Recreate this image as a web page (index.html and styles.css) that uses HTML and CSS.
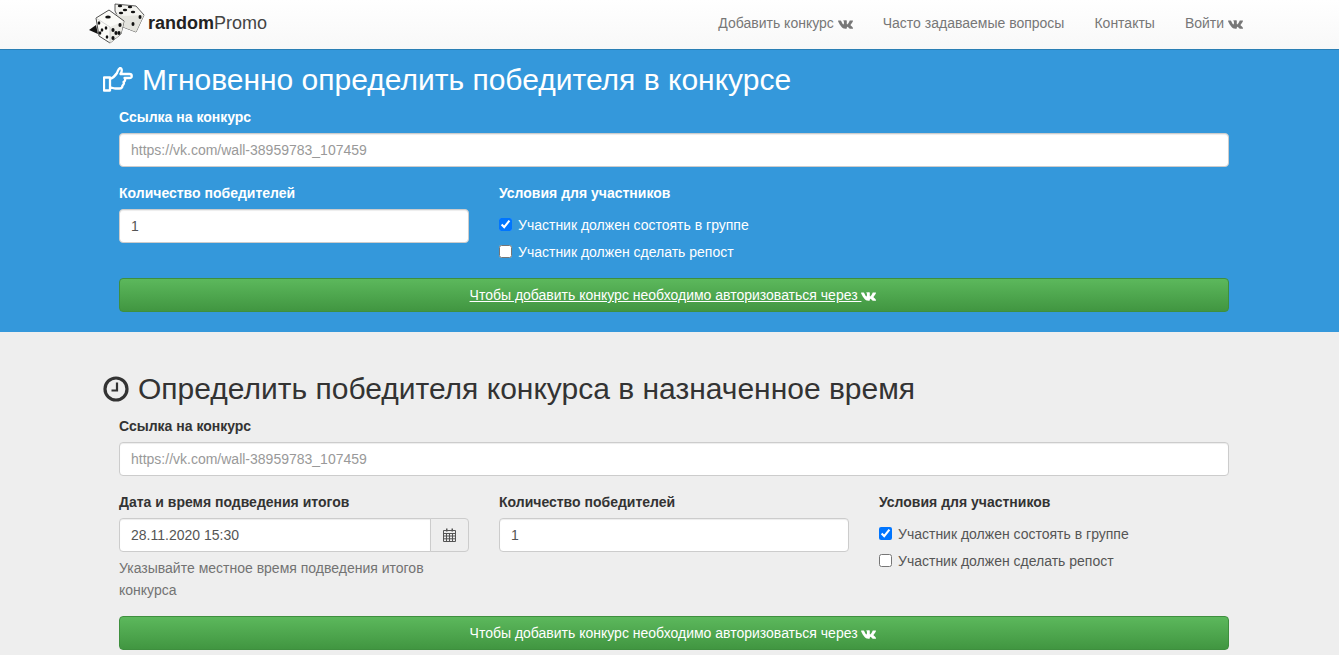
FILE: index.html
```html
<!DOCTYPE html>
<html lang="ru">
<head>
<meta charset="utf-8">
<title>randomPromo</title>
<link rel="stylesheet" href="styles.css">
</head>
<body>
<svg class="defs" aria-hidden="true"><defs><symbol id="vk" viewBox="0 930 1920 1110"><path fill="currentColor" d="M1917 1016q23 64-150 294-24 32-65 85-78 100-90 131-13 41 18 80 17 21 81 82h1l1 1 1 1 2 2q141 131 191 221 3 5 6.5 12.5t7 26.5-.5 34-25 27.5-59 12.5l-256 4q-24 5-56-5t-52-22l-20-12q-30-21-70-64t-68.5-77.5-61-58-56.5-15.5q-3 1-8 3.5t-17 14.5-21.5 29.5-17 52-6.5 77.5q0 15-3.5 27.5t-7.5 18.5l-4 5q-18 19-53 22h-115q-71 4-146-16.5t-131.5-53-103-66-70.5-57.5l-25-24q-10-10-27.5-30t-71.5-91-106-151-122.5-211-130.5-272q-6-16-6-27t3-16l4-6q15-19 57-19l274-2q12 2 23 6.5t16 8.5l5 3q16 11 24 32 20 50 46 103.5t41 81.5l16 29q29 60 56 104t48.5 68.5 41.5 38.5 34 14 27-5q2-1 5-5t12-22 13.5-47 9.5-81 0-125q-2-40-9-73t-14-46l-6-12q-25-34-85-43-13-2 5-24 17-19 38-30 53-26 239-24 82 1 135 13 20 5 33.5 13.5t20.5 24 10.5 32 3.5 45.5-1 55-2.5 70.5-1.5 82.5q0 11-1 42t-.5 48 3.5 40.5 11.5 39 22.5 24.5q8 2 17 4t26-11 38-34.5 52-67 68-107.5q60-104 107-225 4-10 10-17.5t11-10.5l4-3 5-2.5 13-3 20-.5 288-2q39-5 64 2.5t31 16.5z"/></symbol></defs></svg>
<header class="topbar">
  <div class="topbar-inner">
    <a class="brand" href="#">
      <svg class="dice" viewBox="0 0 56 44" aria-hidden="true">
        <path d="M26 3l21 2 8 9-8 17-13-5-8-16z" fill="#f4f4f0" stroke="#333" stroke-width=".8" stroke-linejoin="round"/>
        <path d="M26 13l9 2 20-1-8 17-13-5z" fill="#e4e4de"/>
        <g fill="#111"><ellipse cx="31" cy="5" rx="2.200" ry="1.300"/><ellipse cx="41" cy="6" rx="2.200" ry="1.300"/><ellipse cx="36" cy="9" rx="2.200" ry="1.300"/><ellipse cx="32" cy="12" rx="2.200" ry="1.300"/><ellipse cx="44" cy="11" rx="2.200" ry="1.300"/><ellipse cx="51" cy="16" rx="1.500" ry="1.900"/><ellipse cx="44" cy="23" rx="1.500" ry="1.900"/></g>
        <path d="M0 29l7-5 2 9z" fill="#111"/>
        <path d="M7 17l13-8 15 11-3 13-11 9-11-7z" fill="#fbfbf7" stroke="#222" stroke-width=".8" stroke-linejoin="round"/>
        <path d="M21 26l14-6-3 13-11 9z" fill="#ecece6"/>
        <path d="M7 17l14 9v16" fill="none" stroke="#bbb" stroke-width=".6"/>
        <g fill="#111"><ellipse cx="19" cy="16" rx="2.800" ry="1.500"/><ellipse cx="10" cy="22" rx="1.300" ry="1.800"/><ellipse cx="17" cy="27" rx="1.300" ry="1.800"/><ellipse cx="13" cy="29" rx="1.300" ry="1.800"/><ellipse cx="11" cy="32" rx="1.300" ry="1.800"/><ellipse cx="18" cy="36" rx="1.300" ry="1.800"/><ellipse cx="24" cy="29" rx="1.600" ry="2.100"/><ellipse cx="31" cy="24" rx="1.600" ry="2.100"/><ellipse cx="27" cy="32" rx="1.600" ry="2.100"/><ellipse cx="24" cy="37" rx="1.600" ry="2.100"/><ellipse cx="30" cy="32" rx="1.600" ry="2.100"/></g>
      </svg>
      <span class="brand-name"><b>random</b>Promo</span>
    </a>
    <nav class="nav">
      <a href="#">Добавить конкурс <svg class="vk"><use href="#vk"/></svg></a>
      <a href="#">Часто задаваемые вопросы</a>
      <a href="#">Контакты</a>
      <a href="#">Войти <svg class="vk"><use href="#vk"/></svg></a>
    </nav>
  </div>
</header>

<section class="band band-blue">
  <div class="wrap">
    <h2 class="title">
      <svg class="title-icon hand" viewBox="1 1 31 27" aria-hidden="true"><path d="M2 11.500h6v13H2zM8 13c3-1 5-3 7-6 1-2 1-4 3-5 2 0 2.500 3 .500 6h9c3 0 3 4 0 4h-5c1 1 1 3-1 4 1 1 0 3-1 3.500 0 2-1 3-3 3h-4c-2 0-3.500-1-5.500-1" fill="none" stroke="currentColor" stroke-width="2.300" stroke-linejoin="round" stroke-linecap="round"/></svg>
      Мгновенно определить победителя в конкурсе
    </h2>
    <form class="form">
      <div class="field">
        <label class="label">Ссылка на конкурс</label>
        <input class="input" type="text" placeholder="https://vk.com/wall-38959783_107459">
      </div>
      <div class="cols">
        <div class="col">
          <label class="label">Количество победителей</label>
          <input class="input" type="text" value="1">
        </div>
        <div class="col">
          <label class="label">Условия для участников</label>
          <label class="check"><input type="checkbox" checked> Участник должен состоять в группе</label>
          <label class="check"><input type="checkbox"> Участник должен сделать репост</label>
        </div>
      </div>
      <a class="btn btn-hover" href="#">Чтобы добавить конкурс необходимо авторизоваться через <svg class="vk"><use href="#vk"/></svg></a>
    </form>
  </div>
</section>

<section class="band band-gray">
  <div class="wrap">
    <h2 class="title">
      <svg class="title-icon clock" viewBox="0 0 26 26" aria-hidden="true"><circle cx="13" cy="13" r="11" fill="none" stroke="currentColor" stroke-width="3.200"/><path d="M14 6.500v8H8.500" fill="none" stroke="currentColor" stroke-width="2.200"/></svg>
      Определить победителя конкурса в назначенное время
    </h2>
    <form class="form">
      <div class="field">
        <label class="label">Ссылка на конкурс</label>
        <input class="input" type="text" placeholder="https://vk.com/wall-38959783_107459">
      </div>
      <div class="cols">
        <div class="col">
          <label class="label">Дата и время подведения итогов</label>
          <div class="input-group">
            <input class="input" type="text" value="28.11.2020 15:30">
            <span class="addon">
              <svg class="cal" viewBox="0 0 13 14" aria-hidden="true"><path d="M.500 2.500h12v11H.500zM.500 5.500h12M.500 8h12M.500 10.800h12M3.500 5.500v8M6.500 5.500v8M9.500 5.500v8" fill="none" stroke="currentColor"/><path d="M3 .500h1.500v3H3zM8.500 .500H10v3H8.500z" fill="currentColor"/></svg>
            </span>
          </div>
          <p class="help">Указывайте местное время подведения итогов конкурса</p>
        </div>
        <div class="col">
          <label class="label">Количество победителей</label>
          <input class="input" type="text" value="1">
        </div>
        <div class="col">
          <label class="label">Условия для участников</label>
          <label class="check"><input type="checkbox" checked> Участник должен состоять в группе</label>
          <label class="check"><input type="checkbox"> Участник должен сделать репост</label>
        </div>
      </div>
      <a class="btn" href="#">Чтобы добавить конкурс необходимо авторизоваться через <svg class="vk"><use href="#vk"/></svg></a>
    </form>
  </div>
</section>
</body>
</html>
```

FILE: styles.css
```css
* { box-sizing: border-box; }
html, body { height: 100%; overflow: hidden; }
body {
  margin: 0;
  background: #eee;
  color: #333;
  font: 14px/22px "Liberation Sans", Arial, sans-serif;
}
a { color: inherit; text-decoration: none; }
.defs { display: none; }
.vk { width: 15px; height: 9px; vertical-align: -1px; }

.topbar {
  height: 49px;
  background: linear-gradient(#fff, #f8f8f8);
}
.topbar-inner {
  display: flex;
  align-items: center;
  justify-content: space-between;
  width: 1154px;
  height: 46px;
  margin-left: 89px;
}
.brand { display: flex; align-items: center; gap: 3px; }
.dice { width: 56px; height: 44px; }
.brand-name { font-size: 18px; color: #444; }
.brand-name b { color: #222; }
.nav { display: flex; gap: 30px; color: #777; }

.band-blue {
  height: 283px;
  padding-top: 11px;
  background: #3498db;
  box-shadow: inset 0 1px 0 #2a7fb5;
  color: #fff;
}
.band-gray { color: #333; padding-top: 37px; }
.wrap { margin-left: 104px; width: 1140px; }
.title {
  display: flex;
  align-items: center;
  gap: 8px;
  height: 40px;
  margin: 0;
  font-size: 30px;
  font-weight: 400;
  line-height: 40px;
}
.band-gray .title { gap: 9px; }
.title-icon { flex: none; }
.hand { width: 31px; height: 27px; margin-left: -1px; }
.clock { width: 26px; height: 26px; margin-left: -1px; }

.form { width: 1110px; margin: 6px 0 0 15px; }
.label { display: block; margin-bottom: 5px; font-weight: 700; line-height: 22px; }
.field { margin-bottom: 15px; }
.input {
  display: block;
  width: 100%;
  height: 34px;
  padding: 6px 11px;
  border: 1px solid #ccc;
  border-radius: 4px;
  background: #fff;
  color: #555;
  font: 14px/20px "Liberation Sans", Arial, sans-serif;
  box-shadow: inset 0 1px 1px rgba(0, 0, 0, .075);
}
.input::placeholder { color: #999; opacity: 1; }
.cols { display: flex; gap: 30px; }
.col { flex: 0 0 350px; }
.label + .check { margin-top: 7px; }
.check { display: flex; align-items: center; gap: 6px; height: 27px; color: #555; font-weight: 400; }
.band-blue .check { color: #fff; }
.check input { width: 13px; height: 13px; margin: 0; accent-color: #0075ff; }
.input-group { display: flex; }
.input-group .input { border-radius: 4px 0 0 4px; flex: 1; min-width: 0; }
.addon {
  display: flex;
  align-items: center;
  justify-content: center;
  flex: 0 0 39px;
  margin-left: -1px;
  border: 1px solid #ccc;
  border-radius: 0 4px 4px 0;
  background: #eee;
  color: #555;
}
.cal { width: 13px; height: 14px; }
.help { margin: 5px 0 0; color: #737373; }
.btn {
  display: block;
  height: 34px;
  margin-top: 13px;
  padding-right: 2px;
  border: 1px solid #3e8f3e;
  border-radius: 4px;
  background: linear-gradient(#5cb85c, #419641);
  color: #fff;
  line-height: 32px;
  text-align: center;
}
.band-gray .btn { margin-top: 15px; }
.btn-hover { text-decoration: underline; }
```
